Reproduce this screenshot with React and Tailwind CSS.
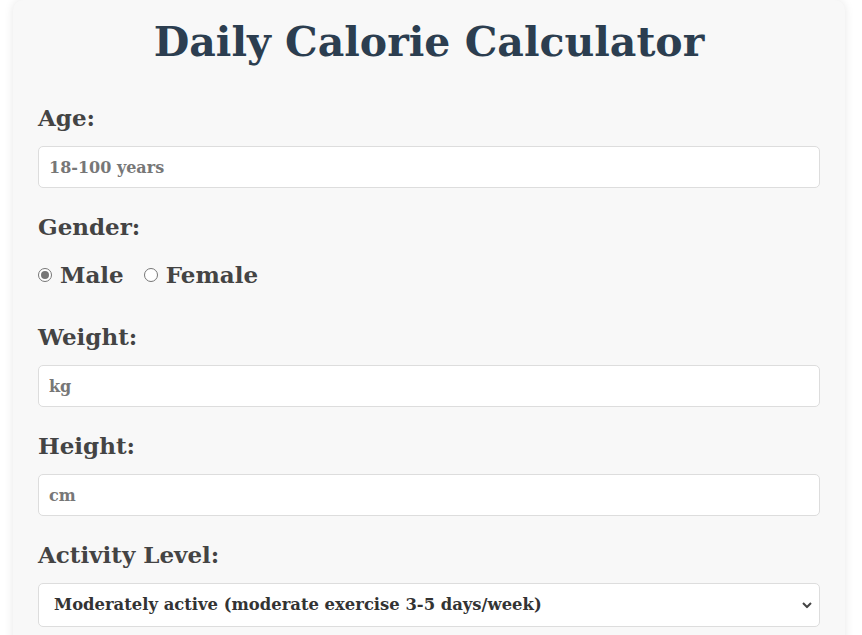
import React, { useState } from 'react';

const serif = { fontFamily: '"DejaVu Serif", Georgia, serif' };

function Field({ label, placeholder }) {
  return (
    <div className="flex flex-col">
      <label className="text-[23px] leading-[32px] font-bold text-[#444] mb-[12px]">{label}</label>
      <input
        type="text"
        placeholder={placeholder}
        className="h-[42px] w-full rounded-[5px] border border-[#dddddd] bg-white px-[10px] text-[16px] font-bold text-[#444] placeholder:text-[#777] outline-none"
      />
    </div>
  );
}

function Radio({ checked, label, onClick }) {
  return (
    <button type="button" onClick={onClick} className="flex items-center gap-[8px]">
      <span className="flex h-[14px] w-[14px] items-center justify-center rounded-full border border-[#767676] bg-white">
        {checked && <span className="h-[8px] w-[8px] rounded-full bg-[#767676]" />}
      </span>
      <span className="text-[23px] leading-[30px] font-bold text-[#444]">{label}</span>
    </button>
  );
}

export default function App() {
  const [gender, setGender] = useState('male');

  return (
    <div className="min-h-screen w-full bg-white" style={serif}>
      <div className="mx-[13px] w-[832px] rounded-[10px] bg-[#f8f8f8] px-[25px] pt-[14px] pb-[30px] shadow-[0_0_10px_rgba(0,0,0,0.1)]">
        <h1 className="text-center text-[41px] leading-[56px] font-bold text-[#2c3e50] mb-[32px]">
          Daily Calorie Calculator
        </h1>

        <div className="flex flex-col gap-[23px]">
          <Field label="Age:" placeholder="18-100 years" />

          <div className="flex flex-col pb-[8px]">
            <label className="text-[23px] leading-[32px] font-bold text-[#444] mb-[17px]">Gender:</label>
            <div className="flex items-center gap-[20px]">
              <Radio checked={gender === 'male'} label="Male" onClick={() => setGender('male')} />
              <Radio checked={gender === 'female'} label="Female" onClick={() => setGender('female')} />
            </div>
          </div>

          <Field label="Weight:" placeholder="kg" />
          <Field label="Height:" placeholder="cm" />

          <div className="flex flex-col">
            <label className="text-[23px] leading-[32px] font-bold text-[#444] mb-[12px]">Activity Level:</label>
            <div className="relative">
              <select
                defaultValue="moderate"
                className="h-[44px] w-full appearance-none rounded-[5px] border border-[#dddddd] bg-white pl-[15px] pr-[30px] text-[16.4px] font-bold text-[#333] outline-none"
              >
                <option value="sedentary">Sedentary (little or no exercise)</option>
                <option value="light">Lightly active (light exercise 1-3 days/week)</option>
                <option value="moderate">Moderately active (moderate exercise 3-5 days/week)</option>
                <option value="very">Very active (hard exercise 6-7 days/week)</option>
              </select>
              <svg className="pointer-events-none absolute right-[8px] top-1/2 -translate-y-1/2" width="10" height="7" viewBox="0 0 10 7">
                <path d="M1 1.5 L5 5.5 L9 1.5" fill="none" stroke="#444" strokeWidth="2" />
              </svg>
            </div>
          </div>
        </div>
      </div>
    </div>
  );
}
